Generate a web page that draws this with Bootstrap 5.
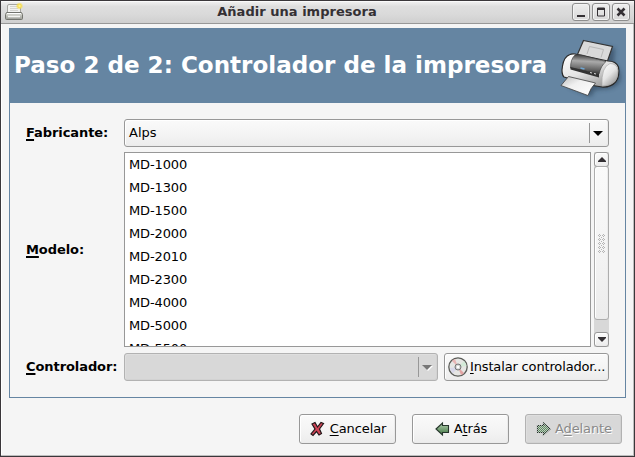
<!DOCTYPE html>
<html lang="es">
<head>
<meta charset="utf-8">
<title>Añadir una impresora</title>
<link href="https://cdn.jsdelivr.net/npm/bootstrap@5.3.0/dist/css/bootstrap.min.css" rel="stylesheet">
<style>
body{font:13px/16px "DejaVu Sans",sans-serif;color:#000;background:#f5f5f5}
.win{width:635px;height:457px;border:1px solid #3a373a;box-shadow:inset -1px -1px #bdbdbd,inset 1px 0 #fff;background:#f5f5f5}
.titlebar{height:23px;border-bottom:1px solid #989898;background:linear-gradient(#f2f2f2,#dedede 25%,#dadada 60%,#cfcfcf);padding:0 4px 0 4px;box-shadow:inset 0 1px #fafafa}
.titlebar .caption{font-weight:bold;color:#343034;letter-spacing:.03px;padding:0 12px 0 9px}
.wbtns{gap:2px}
.wbtn{width:18px;height:18px;border:1px solid #8d8d8d;border-radius:3px;background:linear-gradient(#eee,#d8d8d8);box-shadow:inset 0 0 0 1px #f3f3f3}
.pane{margin:4px 8px 0;width:617px;height:370px;border:1px solid #6585a2}
.banner{height:74px;background:#6585a2;color:#fff;padding-left:4px}
.banner h1{font-size:23.05px;line-height:28px;font-weight:bold;white-space:nowrap;padding-bottom:3px}
.fields{padding:16px 16px 0}
.lab{width:98px;font-weight:bold;white-space:nowrap;letter-spacing:-.08px}
.lab u{text-decoration-thickness:2px;text-underline-offset:2px}
u{text-decoration-skip-ink:none;text-decoration-thickness:1px;text-underline-offset:2px}
.ctl{border:1px solid #989898;border-radius:3px;background:linear-gradient(#fafafa,#f3f3f3 60%,#ececec);box-shadow:inset 1px 1px #fff,inset -1px -1px #ebebeb}
.off{background:#d8d8d8;border-color:#b2b2b2;box-shadow:inset 1px 1px #dedede,inset -1px -1px #d2d2d2;color:#898989;text-shadow:1px 1px #fff}
.combo{height:28px;padding:0 2px 0 4px}
.combo .arrow{border-left:1px solid #989898;height:20px;width:17px}
.gap-row{margin-top:5px}
.gap-row-last{margin-top:6px}
.models{width:467px;height:195px;border:1px solid #989898;background:#fff;line-height:23px;letter-spacing:-.12px}
.models li{padding-left:4px;height:23px}
.sbar{width:15px;height:195px;background:#d8d8d8}
.sbar .end{height:15px}
.sbar .thumb{height:154px;margin-top:-1px;border-color:#adadad}
.install{width:165px;height:28px;margin-left:6px;letter-spacing:-.15px}
.install svg{margin:0 2px 0 3px}
.act{height:30px;width:97px}
.act span{letter-spacing:-.1px}
.actions{gap:16px;padding:16px 12px 0}
</style>
<script src="https://cdn.jsdelivr.net/npm/bootstrap@5.3.0/dist/js/bootstrap.bundle.min.js"></script>
</head>
<body class="overflow-hidden">
<div class="win overflow-hidden">
  <header class="titlebar d-flex align-items-center">
    <svg width="20" height="20" viewBox="0 0 20 20"><defs><radialGradient id="spark"><stop stop-color="#fffbb0"/><stop offset=".45" stop-color="#f7de50"/><stop offset="1" stop-color="#f7de50" stop-opacity="0"/></radialGradient><linearGradient id="tray" x2="0" y2="1"><stop stop-color="#e2e3dc"/><stop offset="1" stop-color="#9b9c96"/></linearGradient></defs><path d="M2.500 11V4q0-1.500 1.500-1.500h10q1.500 0 1.500 1.500v7" fill="#f2f2f0" stroke="#a4a4a0"/><path d="M5 4.500h8M5 6.500h8M5 8.500h8" stroke="#d4d4d0"/><path d="M1.500 10.500h15l1 2v4q0 1-1 1h-15q-1 0-1-1v-4z" fill="url(#tray)" stroke="#73746e"/><path d="M2 11.500h14" stroke="#fff"/><path d="M3 14.500h12" stroke="#f4f4f0" stroke-width="1.500"/><circle cx="14.500" cy="4" r="3.800" fill="url(#spark)"/></svg>
    <div class="caption flex-fill text-center">Añadir una impresora</div>
    <div class="wbtns d-flex">
      <span class="wbtn"><svg class="d-block" width="16" height="16"><path d="M4 11h8v2H4z" fill="#343034"/></svg></span>
      <span class="wbtn"><svg class="d-block" width="16" height="16"><path d="M4.500 4v8h7V4z" fill="none" stroke="#343034"/><path d="M4 5h8" stroke="#343034" stroke-width="2"/></svg></span>
      <span class="wbtn"><svg class="d-block" width="16" height="16"><path d="M4.500 4.500l7 7m0-7l-7 7" stroke="#343034" stroke-width="2.500"/></svg></span>
    </div>
  </header>

  <main class="pane">
    <div class="banner d-flex align-items-center">
      <h1 class="mb-0 flex-fill">Paso 2 de 2: Controlador de la impresora</h1>
      <svg class="flex-shrink-0" width="70" height="70" viewBox="555 30 70 70">
        <defs>
          <linearGradient id="shell" x1="0" y1="0" x2=".7" y2="1"><stop stop-color="#fff"/><stop offset=".55" stop-color="#e4e4e4"/><stop offset="1" stop-color="#999"/></linearGradient>
          <linearGradient id="dark" x1="0" y1="0" x2="-.1" y2="1"><stop stop-color="#444"/><stop offset=".3" stop-color="#aaa"/><stop offset=".7" stop-color="#666"/><stop offset="1" stop-color="#222"/></linearGradient>
          <linearGradient id="sheet" x1="0" y1="0" x2="1" y2="1"><stop stop-color="#bbb"/><stop offset=".4" stop-color="#f0f0f0"/><stop offset="1" stop-color="#fff"/></linearGradient>
          <filter id="soft" x="-20%" y="-20%" width="140%" height="140%"><feGaussianBlur stdDeviation="2"/></filter>
        </defs>
        <path d="M586 43l29 4-1 15q7 6 7 16-3 9-14 10l-12 1-4 7-22-10z" fill="#20354a" opacity=".5" filter="url(#soft)"/>
        <path d="M583.500 39.500l29 6-5.500 16-30-7z" fill="#dadada" stroke="#343434" stroke-width="1.200"/>
        <path d="M587 53l2.500-7.500 14 3-2.500 8" fill="none" stroke="#b8b8b8"/>
        <path d="M570 53.500q2-1 5-.5l33 7q8 0 10.500 6 1.500 9-2.500 14.500-5 6-14 5.500l-9-1.500-29-8.500q-3-3-1.500-11 1.500-9.500 7.500-11.500z" fill="url(#shell)" stroke="#292929" stroke-width="1.200"/>
        <path d="M575 54q3-1 7 0l24 6.500q-5 4-7 12.500L570.500 67q0-9 4.500-13z" fill="url(#dark)" stroke="#333" stroke-width=".6"/>
        <path d="M570.500 66l28.500 7v3.500l-28.500-8z" fill="#333"/>
        <path d="M580.500 67l4 1" stroke="#6da5d2" stroke-width="1.600"/><path d="M590 71.500l2 .5m2 .5l2 .5" stroke="#ddd"/>
        <path d="M602 85q-1-19 8-22.500 7 0 8 7 0 7-3 11-5 4.500-13 4.500z" fill="url(#shell)" stroke="#a2a2a2" stroke-width=".6"/>
        <path d="M568.500 75.500l27 6.500q-5 5-7.500 12.500L561 84.500z" fill="url(#sheet)" stroke="#404040" stroke-width=".8"/>
      </svg>
    </div>

    <form class="fields d-flex flex-column">
      <div class="d-flex align-items-center">
        <label class="lab"><u>F</u>abricante:</label>
        <div class="ctl combo d-flex align-items-center flex-fill"><span class="flex-fill">Alps</span><span class="arrow d-flex align-items-center justify-content-center"><svg width="10" height="6"><path d="M0 1h10L5 6z"/></svg></span></div>
      </div>
      <div class="gap-row d-flex align-items-center">
        <label class="lab"><u>M</u>odelo:</label>
        <ul class="models list-unstyled mb-0 overflow-hidden">
          <li>MD-1000</li><li>MD-1300</li><li>MD-1500</li><li>MD-2000</li><li>MD-2010</li><li>MD-2300</li><li>MD-4000</li><li>MD-5000</li><li>MD-5500</li>
        </ul>
        <div class="sbar d-flex flex-column ms-auto">
          <div class="ctl end d-flex align-items-center justify-content-center"><svg width="8" height="5"><path d="M4 0l4 4v1H0V4z" fill="#343034"/></svg></div>
          <div class="ctl thumb d-flex align-items-center justify-content-center"><svg width="7" height="19" shape-rendering="crispEdges"><defs><pattern id="grip" width="4" height="4" patternUnits="userSpaceOnUse"><path d="M1 0h1v1H1zM0 1h1v1H0zM2 1h1v1H2zM1 2h1v1H1zM3 3h1v1H3z" fill="#b4b4b4"/></pattern></defs><path d="M0 0h7v19H0z" fill="url(#grip)"/></svg></div>
          <div class="ctl end mt-auto d-flex align-items-center justify-content-center"><svg width="8" height="5"><path d="M0 0h8v1L4 5 0 1z" fill="#343034"/></svg></div>
        </div>
      </div>
      <div class="gap-row-last d-flex align-items-center">
        <label class="lab"><u>C</u>ontrolador:</label>
        <div class="ctl off combo d-flex align-items-center flex-fill"><span class="arrow ms-auto d-flex align-items-center justify-content-center"><svg width="11" height="7"><path d="M1 2h10L6 7z" fill="#fff"/><path d="M0 1h10L5 6z" fill="#777"/></svg></span></div>
        <button type="button" class="ctl install p-0 text-nowrap d-flex align-items-center">
          <svg class="flex-shrink-0" width="20" height="20" viewBox="0 0 20 20"><circle cx="10" cy="10" r="9.200" fill="#e6e6e4" stroke="#5b5d59" stroke-width="1.300"/><path d="M10 10L4 4A8.500 8.500 0 0 1 7 2z" fill="#e9b5b5"/><path d="M10 10l6 6a8.500 8.500 0 0 1-3 2z" fill="#e2a3a3"/><path d="M10 10l6-6a8.500 8.500 0 0 1 2.500 5z" fill="#d3ead8"/><path d="M10 10l-8 1a8.500 8.500 0 0 0 3 5.500z" fill="#d8d8ea"/><circle cx="10" cy="10" r="3" fill="#ccc" stroke="#777"/><circle cx="10" cy="10" r="1.500" fill="#fff"/></svg><span><u>I</u>nstalar controlador...</span></button>
      </div>
    </form>
  </main>

  <footer class="actions d-flex justify-content-end">
    <button type="button" class="ctl act p-0 d-flex align-items-center justify-content-center"><svg class="flex-shrink-0" width="21" height="20" viewBox="0 0 21 20"><path d="M3 5l3-1.500L8.500 8 12 3.500l2.500 1L10.500 10l2 4.500-2.500 1.500-2.500-3.500-3.500 4-2-1.500 4-5z" fill="#cf4557" stroke="#211719" stroke-width="1.200"/></svg><span><u>C</u>ancelar</span></button>
    <button type="button" class="ctl act p-0 d-flex align-items-center justify-content-center"><svg class="flex-shrink-0" width="20" height="20" viewBox="0 0 20 20"><defs><linearGradient id="green" x2="0" y2="1"><stop stop-color="#b5d0b1"/><stop offset="1" stop-color="#3f7541"/></linearGradient></defs><path d="M2 10l6.500-6v2.500h6v7h-6V16z" fill="url(#green)" stroke="#26362c" stroke-width="1.100"/></svg><span>A<u>t</u>rás</span></button>
    <button type="button" class="ctl off act p-0 d-flex align-items-center justify-content-center"><svg class="flex-shrink-0" width="20" height="20" viewBox="0 0 20 20"><defs><pattern id="dither" width="2" height="2" patternUnits="userSpaceOnUse"><path d="M0 0h1v1H0zM1 1h1v1H1z" fill="#d8d8d8" fill-opacity=".8" shape-rendering="crispEdges"/></pattern></defs><path d="M15 10L8.500 4v2.500h-6v7h6V16z" fill="#5d8e60" stroke="#26362c" stroke-width="1.200"/><path d="M0 2h17v16H0z" fill="url(#dither)"/></svg><span>A<u>d</u>elante</span></button>
  </footer>
</div>
</body>
</html>
